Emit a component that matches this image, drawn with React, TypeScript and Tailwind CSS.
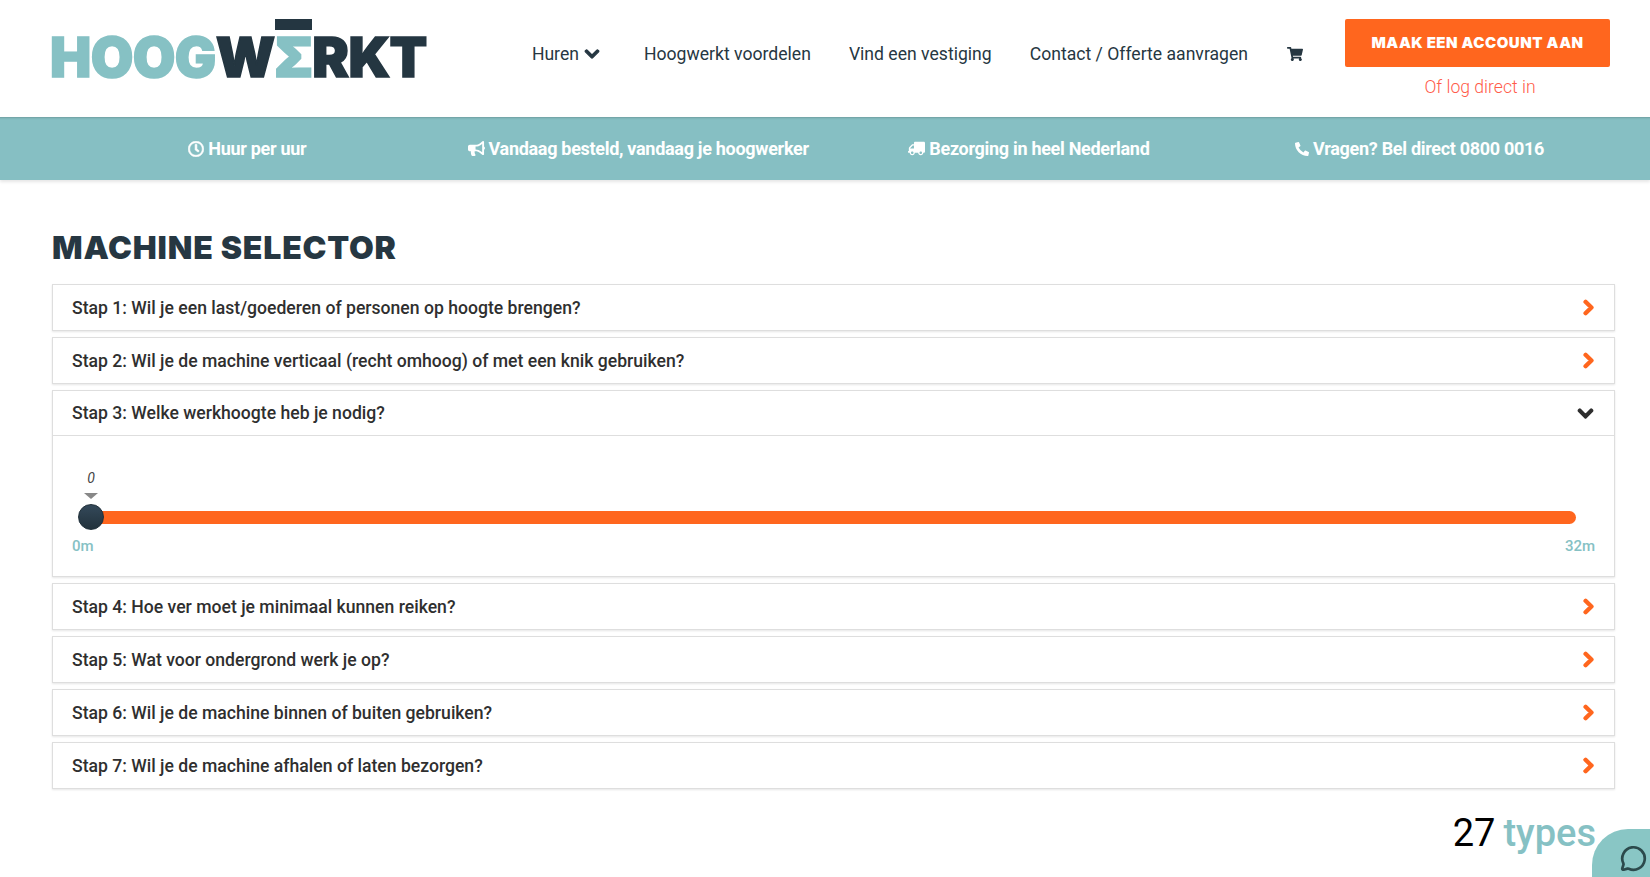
import { FaBullhorn, FaChevronDown, FaChevronRight, FaPhoneAlt, FaRegClock, FaShoppingCart, FaTruck } from "react-icons/fa";
import { MessageCircle } from "lucide-react";

// 選択ステップの一覧
const steps = [
  "Stap 1: Wil je een last/goederen of personen op hoogte brengen?",
  "Stap 2: Wil je de machine verticaal (recht omhoog) of met een knik gebruiken?",
  "Stap 3: Welke werkhoogte heb je nodig?",
  "Stap 4: Hoe ver moet je minimaal kunnen reiken?",
  "Stap 5: Wat voor ondergrond werk je op?",
  "Stap 6: Wil je de machine binnen of buiten gebruiken?",
  "Stap 7: Wil je de machine afhalen of laten bezorgen?",
];

const Logo = () => {
  return (
    <div className="relative mb-[10px] flex h-[60px] items-end font-['Inter',sans-serif] text-[55px] leading-[54px] font-black tracking-[-0.6px] [-webkit-text-stroke:1.5px_currentColor]">
      <span className="text-[#86c1c4]">HOOG</span>
      <span className="text-[#243641]">W</span>
      <span className="relative text-[#86c1c4]">
        Σ
        <span className="absolute top-[-11px] left-0 h-[11px] w-full bg-[#243641]"></span>
      </span>
      <span className="text-[#243641]">RKT</span>
    </div>
  );
};

const Header = () => {
  return (
    <header className="flex h-[117px] items-center pr-[40px] pl-[50px] font-['Roboto',sans-serif]">
      <Logo />
      <nav className="ml-auto flex items-center gap-[38px] pb-[9px] text-[17.6px] text-[#263742]">
        <span className="flex items-center gap-[5px]">
          Huren <FaChevronDown className="text-[16px]" stroke="currentColor" strokeWidth={40} />
        </span>
        <span className="ml-[6px]">Hoogwerkt voordelen</span>
        <span>Vind een vestiging</span>
        <span>Contact / Offerte aanvragen</span>
        <FaShoppingCart className="ml-[1px] text-[16px]" />
      </nav>
      <div className="mt-[3px] ml-[42px] flex w-[265px] flex-col items-center">
        <button className="h-[48px] w-full rounded-[2px] bg-[#ff661e] font-['Inter',sans-serif] text-[15px] font-black tracking-[0.5px] text-white">
          MAAK EEN ACCOUNT AAN
        </button>
        <span className="mt-[7px] pl-[5px] text-[17.6px] font-light text-[#ff5c4a]">Of log direct in</span>
      </div>
    </header>
  );
};

const InfoBar = () => {
  return (
    <div className="grid h-[63px] grid-cols-4 items-center bg-[#86bfc3] pr-[35px] pl-[52px] font-['Roboto',sans-serif] text-[18px] font-bold tracking-[-0.3px] text-white shadow-[inset_0_3px_2px_-2px_rgba(0,0,0,0.18),0_2px_3px_rgba(0,0,0,0.1)]">
      <span className="flex items-center justify-center gap-[4px]">
        <FaRegClock className="text-[16px]" stroke="currentColor" strokeWidth={20} /> Huur per uur
      </span>
      <span className="flex items-center justify-center gap-[4px]">
        <FaBullhorn className="text-[17px]" /> Vandaag besteld, vandaag je hoogwerker
      </span>
      <span className="flex items-center justify-center gap-[4px]">
        <FaTruck className="-scale-x-100 text-[17px]" /> Bezorging in heel Nederland
      </span>
      <span className="flex items-center justify-center gap-[4px]">
        <FaPhoneAlt className="text-[14px]" /> Vragen? Bel direct 0800 0016
      </span>
    </div>
  );
};

const Slider = () => {
  return (
    <div className="px-[19px] pt-[75px]">
      <div className="relative ml-[19px] h-[13px] w-[1485px] rounded-r-full bg-[#ff661e]">
        <span className="absolute top-[-43px] left-[-4px] w-[8px] text-center text-[14px] text-[#444] italic">0</span>
        <span className="absolute top-[-18px] left-[-7px] h-0 w-0 border-x-[7px] border-t-[6px] border-x-transparent border-t-[#888]"></span>
        <span className="absolute top-[-7px] left-[-13px] h-[26px] w-[26px] rounded-full border border-[#1f2f39] bg-linear-to-b from-[#34495a] to-[#22323c]"></span>
      </div>
      <div className="mt-[11px] flex justify-between text-[15px] font-medium text-[#86c1c4]">
        <span>0m</span>
        <span>32m</span>
      </div>
    </div>
  );
};

const StepItem = ({ title, open }: { title: string; open: boolean }) => {
  return (
    <div className="border border-[#dedede] bg-white shadow-[0_1px_2px_rgba(0,0,0,0.1)]">
      <div className={"flex h-[45px] items-center justify-between pt-[1px] pr-[19px] pl-[19px] " + (open ? "border-b border-[#dedede]" : "")}>
        <span className="text-[17.6px] font-medium text-[#2f2f2f]">{title}</span>
        {open ? (
          <FaChevronDown className="mr-[1px] text-[17px] text-[#2f2f2f]" stroke="currentColor" strokeWidth={40} />
        ) : (
          <FaChevronRight className="mr-[-2px] mb-[2px] text-[17px] text-[#ff661e]" stroke="currentColor" strokeWidth={50} />
        )}
      </div>
      {open && <div className="h-[140px]"><Slider /></div>}
    </div>
  );
};

const App = () => {
  return (
    <div className="relative h-[877px] overflow-hidden bg-white font-['Roboto',sans-serif]">
      <Header />
      <InfoBar />
      <main className="pr-[35px] pl-[52px]">
        <h1 className="mt-[49px] mb-[17px] font-['Inter',sans-serif] text-[32px] leading-[38px] font-black tracking-[0.8px] text-[#263742]">
          MACHINE SELECTOR
        </h1>
        <div className="flex flex-col gap-[6px]">
          {steps.map((step, i) => {
            return <StepItem key={step} title={step} open={i === 2} />;
          })}
        </div>
        <div className="mt-[22px] flex justify-end gap-[8px] pr-[19px] text-[38px] leading-[44px]">
          <span className="text-black">27</span>
          <span className="font-medium text-[#86c1c4]">types</span>
        </div>
      </main>
      {/* チャットボタン */}
      <div className="fixed top-[829px] left-[1592px] flex h-[60px] w-[70px] items-start rounded-tl-[36px] bg-[#89c6c5] pt-[16px] pl-[28px]">
        <MessageCircle className="h-[27px] w-[27px] text-[#2c4a4c]" strokeWidth={2.4} />
      </div>
    </div>
  );
};
export default App;
